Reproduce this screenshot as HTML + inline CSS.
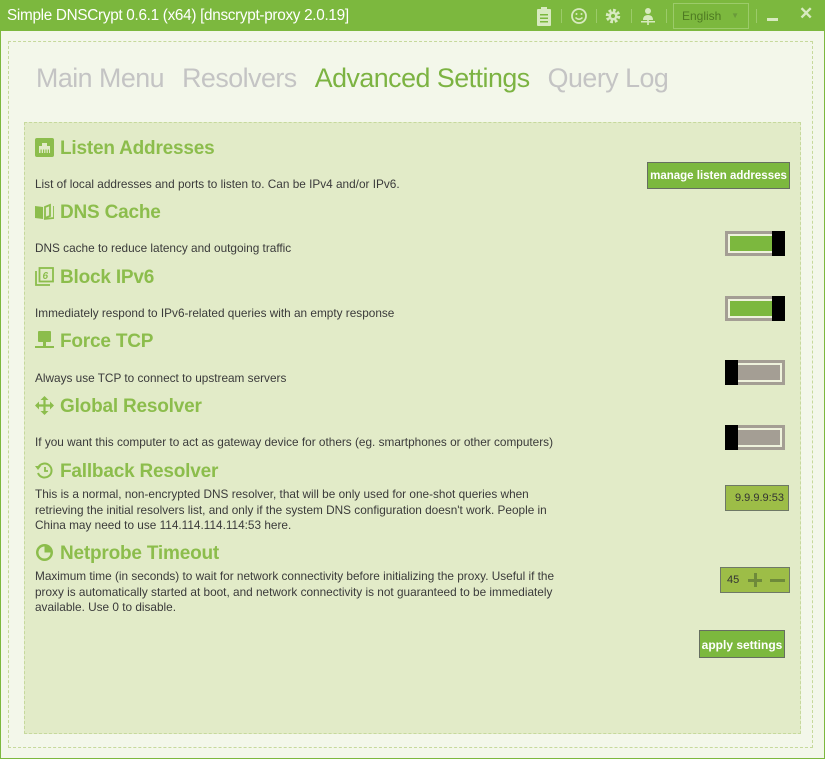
<!DOCTYPE html>
<html><head><meta charset="utf-8"><style>
*{margin:0;padding:0;box-sizing:border-box}
body{width:825px;height:759px;overflow:hidden;background:#f3f7ea;font-family:"Liberation Sans",sans-serif;position:relative}
.win{position:absolute;left:0;top:0;width:825px;height:759px;border:1px solid #7cb83e;border-top:none}
.title{position:absolute;left:0;top:0;width:825px;height:31px;background:#7cb83e;color:#fff;font-size:15.3px;line-height:31px;padding-left:7px;letter-spacing:-0.3px}
.ti{position:absolute;top:0;height:31px;color:#d8eac0}
.sep{position:absolute;top:9px;width:1px;height:14px;background:#9ccb6a}
.outer{position:absolute;left:8px;top:41px;width:805px;height:707px;border:1px dashed #c6d99c}
.tabs{position:absolute;top:63px;left:36px;font-size:26.8px;color:#c4c4c4;letter-spacing:-0.5px;white-space:nowrap}
.tabs span{margin-right:18px}
.inner{position:absolute;left:24px;top:122px;width:777px;height:612px;border:1px dashed #c6d99c;background:#e2ebc8}
.h{position:absolute;left:35px;font-size:19px;font-weight:bold;color:#8cbd4c;white-space:nowrap;letter-spacing:-0.2px}
.h i{display:inline-block;width:19px;height:19px;vertical-align:-3px;margin-right:6px}
.d{position:absolute;left:35px;font-size:11.8px;color:#3a3a3a;line-height:15.5px;white-space:nowrap}
.tg{position:absolute;left:725px;width:60px;height:25px;border:3px solid #a49e94;background:#eef2dc}
.tg .f{position:absolute;top:2px;height:15px}
.tg .k{position:absolute;top:-3px;width:13px;height:25px;background:#000}
.btn{position:absolute;background:#7cb83e;border:1px solid #666e60;color:#fff;font-weight:bold;font-size:11.5px;text-align:center}
.box{position:absolute;background:#9dbd47;border:1px solid #6e7866;color:#333;font-size:11px}
</style></head><body>
<div class="win"></div>
<div class="title">Simple DNSCrypt 0.6.1 (x64) [dnscrypt-proxy 2.0.19]</div>
<svg class="ti" style="left:535px;width:18px" viewBox="0 0 18 31"><rect x="2" y="9" width="14" height="17" rx="1" fill="#d8eac0"/><rect x="6" y="7" width="6" height="4" fill="#d8eac0"/><rect x="5" y="14" width="8" height="1.5" fill="#7cb83e"/><rect x="5" y="17.5" width="8" height="1.5" fill="#7cb83e"/><rect x="5" y="21" width="8" height="1.5" fill="#7cb83e"/></svg>
<div class="sep" style="left:561px"></div>
<svg class="ti" style="left:570px;width:18px" viewBox="0 0 18 31"><circle cx="9" cy="16" r="7" fill="none" stroke="#d8eac0" stroke-width="1.8"/><circle cx="6.5" cy="14" r="1" fill="#d8eac0"/><circle cx="11.5" cy="14" r="1" fill="#d8eac0"/><path d="M5.5 17.5q3.5 3.5 7 0" fill="none" stroke="#d8eac0" stroke-width="1.5"/></svg>
<div class="sep" style="left:596px"></div>
<svg class="ti" style="left:604px;width:18px" viewBox="0 0 18 31"><circle cx="9" cy="16" r="5.5" fill="none" stroke="#d8eac0" stroke-width="3.5" stroke-dasharray="2.6 1.7"/><circle cx="9" cy="16" r="4.5" fill="#d8eac0"/><circle cx="9" cy="16" r="2" fill="#7cb83e"/></svg>
<div class="sep" style="left:631px"></div>
<svg class="ti" style="left:639px;width:18px" viewBox="0 0 18 31"><circle cx="9" cy="11" r="3" fill="#d8eac0"/><path d="M4 20q0-5 5-5t5 5z" fill="#d8eac0"/><rect x="2" y="21" width="14" height="1.5" fill="#d8eac0"/><rect x="8.2" y="20" width="1.6" height="5" fill="#d8eac0"/></svg>
<div class="sep" style="left:666px"></div>
<div style="position:absolute;left:673px;top:3px;width:76px;height:26px;border:1px solid #9ccb6a;color:#4e7a22;font-size:12px;line-height:24px;padding-left:8px">English<span style="position:absolute;right:9px;top:0;font-size:8px;color:#6a9a3a">▼</span></div>
<div class="sep" style="left:756px"></div>
<div style="position:absolute;left:767px;top:18px;width:11px;height:3px;background:#d8eac0"></div>
<div style="position:absolute;left:799px;top:4px;color:#d8eac0;font-size:17px;font-weight:bold">✕</div>
<div class="outer"></div>
<div class="tabs"><span>Main Menu</span><span>Resolvers</span><span style="color:#7cb342">Advanced Settings</span><span>Query Log</span></div>
<div class="inner"></div>

<div class="h" style="top:138px"><i><svg viewBox="0 0 19 19" width="19" height="19"><rect x="0" y="0" width="19" height="19" rx="2" fill="#8cbd4c"/><path d="M4 15V8h3V5h5v3h3v7z" fill="#e2ebc8"/><rect x="5.5" y="11.5" width="1.2" height="3.5" fill="#8cbd4c"/><rect x="8" y="11.5" width="1.2" height="3.5" fill="#8cbd4c"/><rect x="10.4" y="11.5" width="1.2" height="3.5" fill="#8cbd4c"/><rect x="12.8" y="11.5" width="1.2" height="3.5" fill="#8cbd4c"/></svg></i>Listen Addresses</div>
<div class="d" style="top:177px">List of local addresses and ports to listen to. Can be IPv4 and/or IPv6.</div>
<div class="btn" style="left:647px;top:162px;width:143px;height:27px;line-height:27px">manage listen addresses</div>

<div class="h" style="top:202px"><i><svg viewBox="0 0 19 19" width="19" height="19"><path d="M0 4l8 1v12l-8-1z" fill="#8cbd4c"/><path d="M10 5l5-2v11l-5 2z" fill="none" stroke="#8cbd4c" stroke-width="1.8"/><path d="M9 17l10-1V4" fill="none" stroke="#8cbd4c" stroke-width="1.8"/></svg></i>DNS Cache</div>
<div class="d" style="top:241px">DNS cache to reduce latency and outgoing traffic</div>
<div class="tg" style="top:231px"><div class="f" style="left:2px;width:42px;background:#7cb83e"></div><div class="k" style="right:-3px"></div></div>

<div class="h" style="top:267px"><i><svg viewBox="0 0 19 19" width="19" height="19"><rect x="4.5" y="1" width="13.5" height="13.5" fill="none" stroke="#8cbd4c" stroke-width="1.8"/><path d="M1 4v14h14" fill="none" stroke="#8cbd4c" stroke-width="1.8"/><text x="7.5" y="12" font-size="10" font-weight="bold" fill="#8cbd4c" font-family="Liberation Sans">6</text></svg></i>Block IPv6</div>
<div class="d" style="top:306px">Immediately respond to IPv6-related queries with an empty response</div>
<div class="tg" style="top:296px"><div class="f" style="left:2px;width:42px;background:#7cb83e"></div><div class="k" style="right:-3px"></div></div>

<div class="h" style="top:331px"><i><svg viewBox="0 0 19 19" width="19" height="19"><rect x="3" y="0" width="13" height="11" rx="1" fill="#8cbd4c"/><rect x="8" y="11" width="3" height="4" fill="#8cbd4c"/><rect x="0" y="15" width="19" height="2" fill="#8cbd4c"/></svg></i>Force TCP</div>
<div class="d" style="top:371px">Always use TCP to connect to upstream servers</div>
<div class="tg" style="top:360px"><div class="f" style="right:2px;width:42px;background:#a49e94"></div><div class="k" style="left:-3px"></div></div>

<div class="h" style="top:396px"><i><svg viewBox="0 0 19 19" width="19" height="19"><path d="M9.5 1v17M1 9.5h17" stroke="#8cbd4c" stroke-width="2.2"/><path d="M9.5 0l-4 4h8zM9.5 19l-4-4h8zM0 9.5l4-4v8zM19 9.5l-4-4v8z" fill="#8cbd4c"/></svg></i>Global Resolver</div>
<div class="d" style="top:435px">If you want this computer to act as gateway device for others (eg. smartphones or other computers)</div>
<div class="tg" style="top:425px"><div class="f" style="right:2px;width:42px;background:#a49e94"></div><div class="k" style="left:-3px"></div></div>

<div class="h" style="top:461px"><i><svg viewBox="0 0 19 19" width="19" height="19"><path d="M3.5 6A7 7 0 1 1 3 12" fill="none" stroke="#8cbd4c" stroke-width="2"/><path d="M0 5h6l-3 4z" fill="#8cbd4c"/><path d="M10 6v4h3" fill="none" stroke="#8cbd4c" stroke-width="1.8"/></svg></i>Fallback Resolver</div>
<div class="d" style="top:487px">This is a normal, non-encrypted DNS resolver, that will be only used for one-shot queries when<br>retrieving the initial resolvers list, and only if the system DNS configuration doesn't work. People in<br>China may need to use 114.114.114.114:53 here.</div>
<div class="box" style="left:725px;top:485px;width:64px;height:26px;line-height:24px;padding-left:9px">9.9.9.9:53</div>

<div class="h" style="top:543px"><i><svg viewBox="0 0 19 19" width="19" height="19"><circle cx="9.5" cy="9.5" r="8.5" fill="#8cbd4c"/><path d="M9.5 3.5A6 6 0 1 0 15.5 9.5H9.5z" fill="#e2ebc8"/></svg></i>Netprobe Timeout</div>
<div class="d" style="top:569px">Maximum time (in seconds) to wait for network connectivity before initializing the proxy. Useful if the<br>proxy is automatically started at boot, and network connectivity is not guaranteed to be immediately<br>available. Use 0 to disable.</div>
<div class="box" style="left:720px;top:567px;width:70px;height:26px;line-height:24px;padding-left:6px">45<span style="position:absolute;left:27px;top:5px;width:14px;height:14px"><span style="position:absolute;left:0;top:6px;width:14px;height:3px;background:#6e8a3a"></span><span style="position:absolute;left:5.5px;top:0;width:3px;height:14px;background:#6e8a3a"></span></span><span style="position:absolute;left:49px;top:11px;width:15px;height:3px;background:#6e8a3a"></span></div>

<div class="btn" style="left:699px;top:630px;width:86px;height:28px;line-height:28px;font-size:12px">apply settings</div>
</body></html>
